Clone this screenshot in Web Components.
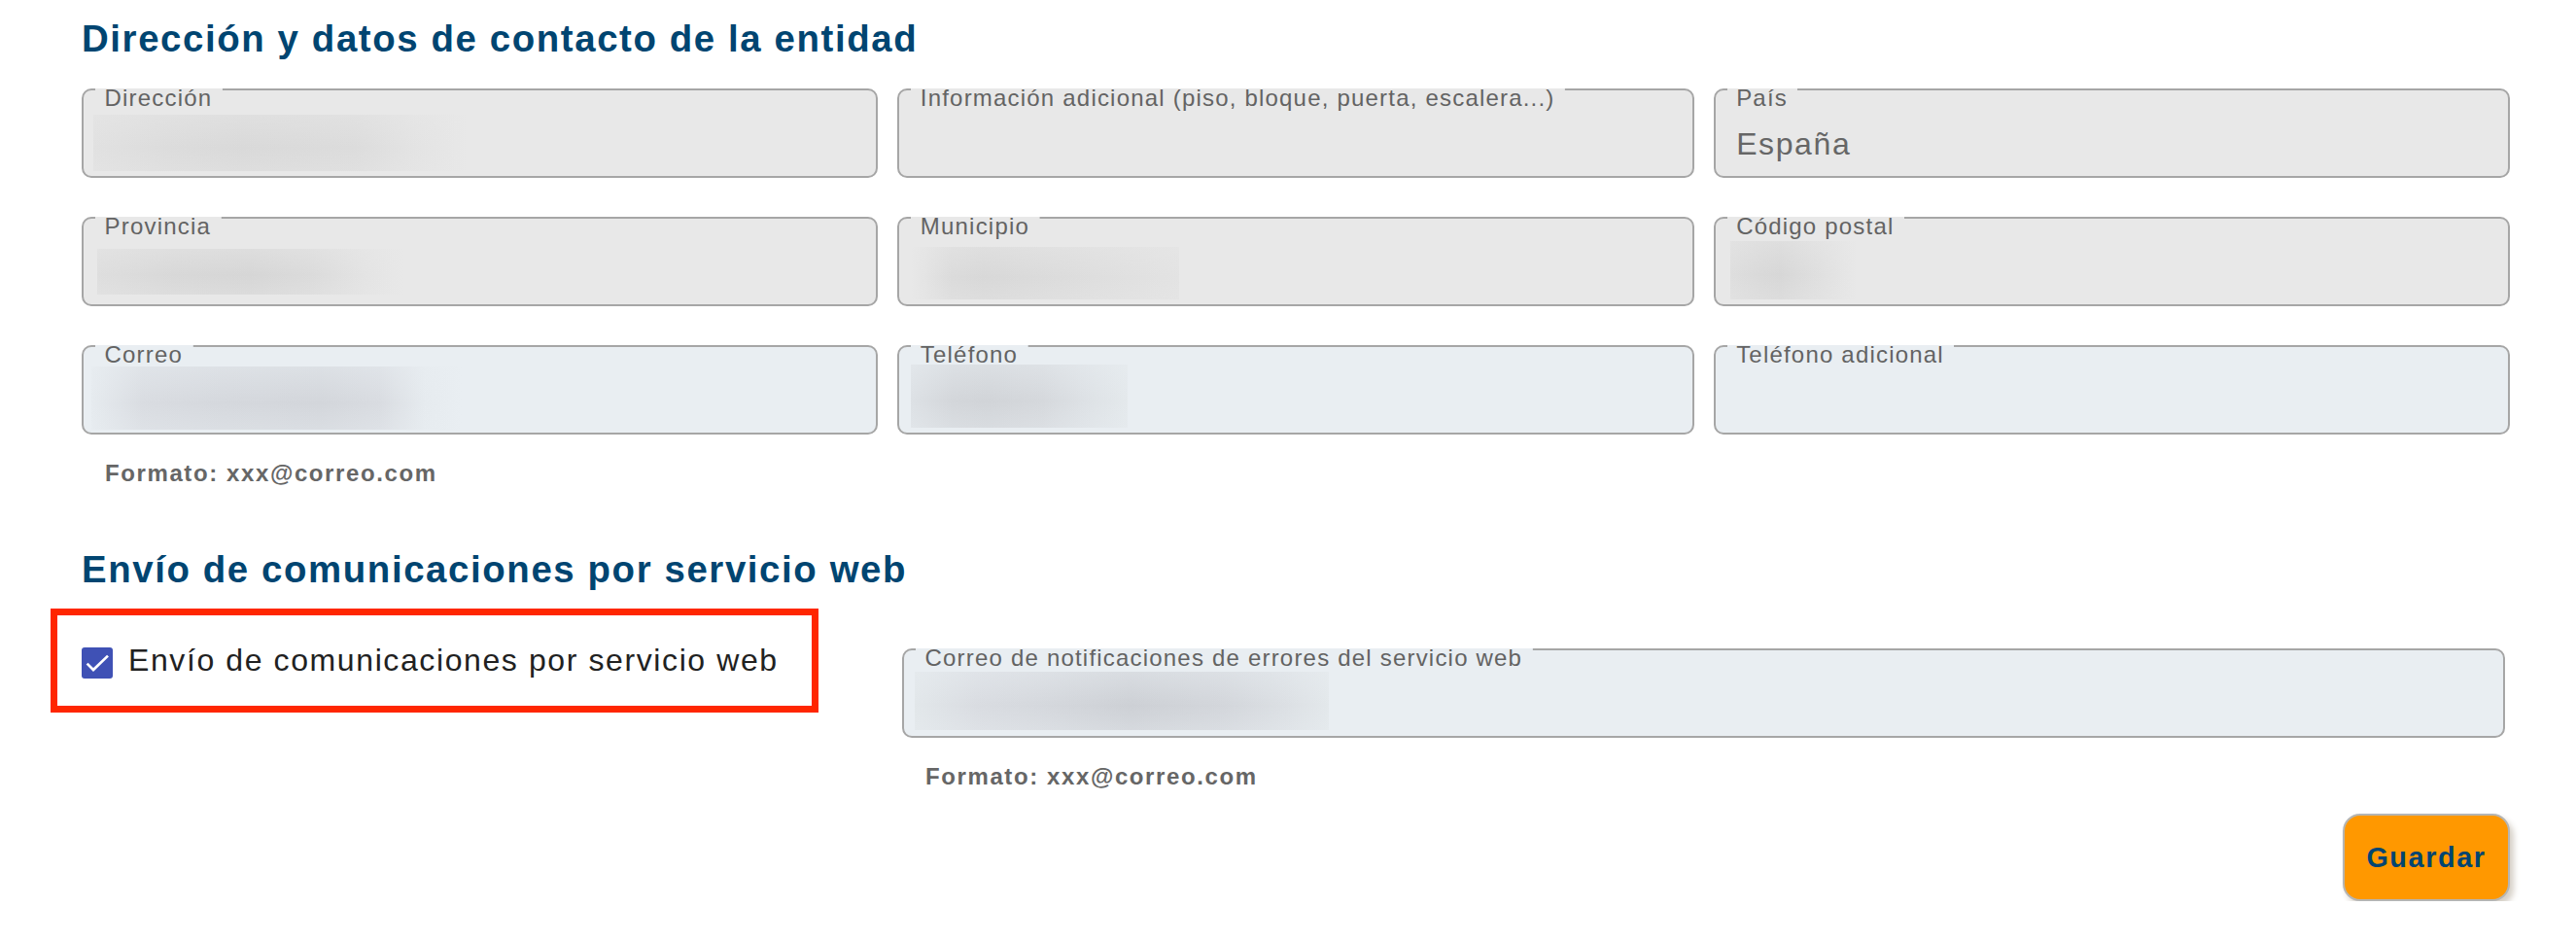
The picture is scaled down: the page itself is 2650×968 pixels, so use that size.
<!DOCTYPE html>
<html lang="es">
<head>
<meta charset="utf-8">
<title>Datos de contacto de la entidad</title>
<style>
  html, body { margin: 0; background: #fff; }
  body { font-family: "Liberation Sans", Arial, sans-serif; letter-spacing: 1.6px; color: #212121; }
</style>
</head>
<body>
<entity-form></entity-form>
<script>
const define = (name, html, setup) => customElements.define(name, class extends HTMLElement {
  constructor() {
    super();
    const t = document.createElement('template');
    t.innerHTML = html;
    this.attachShadow({ mode: 'open' }).append(t.content.cloneNode(true));
  }
  connectedCallback() { if (setup) setup(this, this.shadowRoot); }
});

define('section-title', `
  <style>
    :host { display: block; }
    h2 { margin: 0; font-size: 38.4px; line-height: 44px; font-weight: 700; color: #004571; white-space: nowrap; }
  </style>
  <h2><slot></slot></h2>`);

define('outlined-field', `
  <style>
    :host { display: block; --fill: #e9eef2; }
    :host([disabled]) { --fill: #e8e8e8; }
    .box { box-sizing: border-box; height: 92px; border: 2px solid #a6a6a6; border-radius: 10px; background: var(--fill); display: flex; flex-direction: column; align-items: flex-start; }
    .label { flex: none; position: relative; z-index: 1; margin: -2px 0 0 12px; height: 24px; line-height: 19px; padding: 0 var(--notch-end, 10.5px) 0 9.5px; background: linear-gradient(var(--fill), var(--fill)) top / 100% 3px no-repeat; font-size: 24px; letter-spacing: 1.2px; color: #636363; white-space: nowrap; }
    .value { font-size: 32px; line-height: 36px; margin: 15px 0 0 21.5px; color: #666; }
    .hint { display: block; font-size: 24px; line-height: 28px; font-weight: 700; margin: 26px 0 -1px 24px; color: #666; white-space: nowrap; }
    .hint[hidden] { display: none; }
    ::slotted(redacted-value) { margin-top: -15px; margin-left: -21.5px; }
  </style>
  <div class="box"><div class="label"></div><div class="value"><slot></slot></div></div>
  <div class="hint" hidden></div>`,
  (host, root) => {
    root.querySelector('.label').textContent = host.getAttribute('label');
    const hint = root.querySelector('.hint');
    if (host.hasAttribute('hint')) { hint.textContent = host.getAttribute('hint'); hint.hidden = false; }
  });

// Blurred stand-in for a private value; x/y are insets from the field's outer corner.
define('redacted-value', `
  <style>
    :host { display: block; }
    div { background: linear-gradient(to bottom, color-mix(in srgb, var(--fill) 42%, transparent), transparent 58%, color-mix(in srgb, var(--fill) 30%, transparent)), var(--smear); }
  </style>
  <div></div>`,
  (host, root) => {
    const d = root.querySelector('div'), n = a => Number(host.getAttribute(a));
    d.style.width = n('w') + 'px';
    d.style.height = n('h') + 'px';
    d.style.marginLeft = n('x') - 2 + 'px';
    d.style.transform = `translateY(${n('y') - 24}px)`;
  });

define('check-option', `
  <style>
    :host { display: flex; align-items: flex-start; font-size: 32px; line-height: 36px; white-space: nowrap; }
    svg { flex: none; display: block; margin: 6px 16px 0 0; }
    span { padding-top: 1px; }
  </style>
  <svg width="32" height="32" viewBox="0 0 32 32"><rect width="32" height="32" rx="3" fill="#3f51b5"/><path d="M5.6 16.6 L12 23 L27 8.6" fill="none" stroke="#fff" stroke-width="2.7"/></svg>
  <span><slot></slot></span>`);

define('highlight-frame', `
  <style>:host { display: block; box-sizing: border-box; border: 7px solid #ff2600; }</style>
  <slot></slot>`);

define('action-button', `
  <style>
    :host { display: block; }
    button { display: block; box-sizing: border-box; width: 172px; height: 90px; padding: 0; border: 2px solid #b5b5b3; border-radius: 18px; background: #ff9800; color: #004571; font: 700 28.8px/32px "Liberation Sans", Arial, sans-serif; letter-spacing: 1.6px; box-shadow: 4px 5px 6px #d5cfc6; }
  </style>
  <button type="button"><slot></slot></button>`);

define('entity-form', `
  <style>
    :host { display: block; padding: 18px 68px 0 84px; }
    .grid { display: grid; grid-template-columns: repeat(3, 1fr); gap: 40px 20px; margin: 29px 0 64px; align-items: start; }
    .service { display: flex; align-items: flex-start; margin-top: 18px; }
    highlight-frame { flex: none; width: 790px; height: 107px; margin-left: -32.5px; padding: 27px 0 0 25.5px; }
    .mail { flex: none; width: 1649px; margin: 41px 0 0 86.5px; }
    .actions { display: flex; justify-content: flex-end; margin-top: 25px; }
  </style>
  <section-title>Dirección y datos de contacto de la entidad</section-title>
  <div class="grid">
    <outlined-field disabled label="Dirección"><redacted-value x="12" y="27" w="385" h="58" style="--smear:linear-gradient(90deg,#e1e1e1,#dcdcdc 20%,#d9d9d9 40%,#dcdcdc 70%,#e3e3e3 85%,#e8e8e8)"></redacted-value></outlined-field>
    <outlined-field disabled label="Información adicional (piso, bloque, puerta, escalera...)"></outlined-field>
    <outlined-field disabled label="País">España</outlined-field>
    <outlined-field disabled label="Provincia"><redacted-value x="16" y="33" w="315" h="47" style="--smear:linear-gradient(90deg,#dedede,#d8d8d8 25%,#d6d6d6 50%,#dbdbdb 70%,#e4e4e4 88%,#e8e8e8)"></redacted-value></outlined-field>
    <outlined-field disabled label="Municipio"><redacted-value x="15" y="31" w="275" h="54" style="--smear:linear-gradient(90deg,#e8e8e8,#dbdbdb 15%,#d8d8d8 27%,#dcdcdc 55%,#e0e0e0 80%,#e3e3e3)"></redacted-value></outlined-field>
    <outlined-field disabled label="Código postal"><redacted-value x="17" y="25" w="130" h="60" style="--smear:linear-gradient(90deg,#dedede,#d9d9d9 25%,#d7d7d7 40%,#dedede 65%,#e8e8e8)"></redacted-value></outlined-field>
    <outlined-field label="Correo" hint="Formato: xxx@correo.com"><redacted-value x="10" y="22" w="381" h="65" style="--smear:linear-gradient(90deg,#e6ebef,#d9dce1 14%,#d5d8dd 35%,#d3d6db 62%,#d9dce1 78%,#e6ebef 90%,#e9eef2)"></redacted-value></outlined-field>
    <outlined-field label="Teléfono"><redacted-value x="14" y="20" w="223" h="65" style="--smear:linear-gradient(90deg,#dde1e5,#d3d6da 20%,#d1d4d8 35%,#d5d8dc 60%,#dde1e5 80%,#e4e9ec)"></redacted-value></outlined-field>
    <outlined-field label="Teléfono adicional"></outlined-field>
  </div>
  <section-title>Envío de comunicaciones por servicio web</section-title>
  <div class="service">
    <highlight-frame><check-option>Envío de comunicaciones por servicio web</check-option></highlight-frame>
    <outlined-field class="mail" label="Correo de notificaciones de errores del servicio web" hint="Formato: xxx@correo.com"><redacted-value x="13" y="24" w="426" h="60" style="--smear:linear-gradient(90deg,#e2e7ea,#d9dce1 15%,#d5d8dd 30%,#cdd0d5 52%,#d3d6db 75%,#dce0e4 90%,#e3e8eb)"></redacted-value></outlined-field>
  </div>
  <div class="actions"><action-button>Guardar</action-button></div>`);
</script>
</body>
</html>
